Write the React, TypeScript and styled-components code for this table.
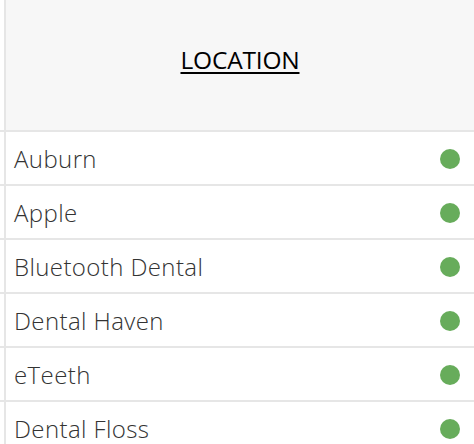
import React from "react";
import styled, { createGlobalStyle } from "styled-components";

const Global = createGlobalStyle`
  html, body { margin: 0; padding: 0; background: #ffffff; }
  body { font-family: "Open Sans", "Noto Sans", sans-serif; }
`;

const Table = styled.div`
  display: flex;
  flex-direction: column;
  width: 474px;
  height: 444px;
  overflow: hidden;
`;

const Row = styled.div<{ $header?: boolean }>`
  display: flex;
  height: ${(p) => (p.$header ? "130px" : "52px")};
  border-bottom: 2px solid #e6e6e6;
  flex-shrink: 0;
`;

const Stub = styled.div`
  width: 4px;
  flex-shrink: 0;
  border-right: 2px solid #e6e6e6;
  background: #ffffff;
`;

const HeaderCell = styled.div`
  flex: 1;
  display: flex;
  align-items: center;
  justify-content: center;
  background: #f7f7f7;
  padding-bottom: 12px;
  box-sizing: border-box;
`;

const HeaderLabel = styled.span`
  font-size: 24.5px;
  color: #000;
  text-decoration: underline;
  text-underline-offset: 3px;
  text-decoration-thickness: 2px;
  letter-spacing: -0.2px;
`;

const Cell = styled.div`
  flex: 1;
  display: flex;
  align-items: center;
  justify-content: space-between;
  padding: 0 14px 0 8px;
`;

const Name = styled.span`
  font-size: 24px;
  color: #333;
  font-weight: 300;
  letter-spacing: 0.4px;
`;

const Dot = styled.span<{ $color: string }>`
  width: 20px;
  height: 20px;
  border-radius: 50%;
  background: ${(p) => p.$color};
  margin-top: 2px;
`;

const locations = ["Auburn", "Apple", "Bluetooth Dental", "Dental Haven", "eTeeth", "Dental Floss"];

export default function App() {
  return (
    <>
      <Global />
      <Table>
        <Row $header>
          <Stub />
          <HeaderCell>
            <HeaderLabel>LOCATION</HeaderLabel>
          </HeaderCell>
        </Row>
        {locations.map((name) => (
          <Row key={name}>
            <Stub />
            <Cell>
              <Name>{name}</Name>
              <Dot $color="#67ac5b" />
            </Cell>
          </Row>
        ))}
      </Table>
    </>
  );
}
